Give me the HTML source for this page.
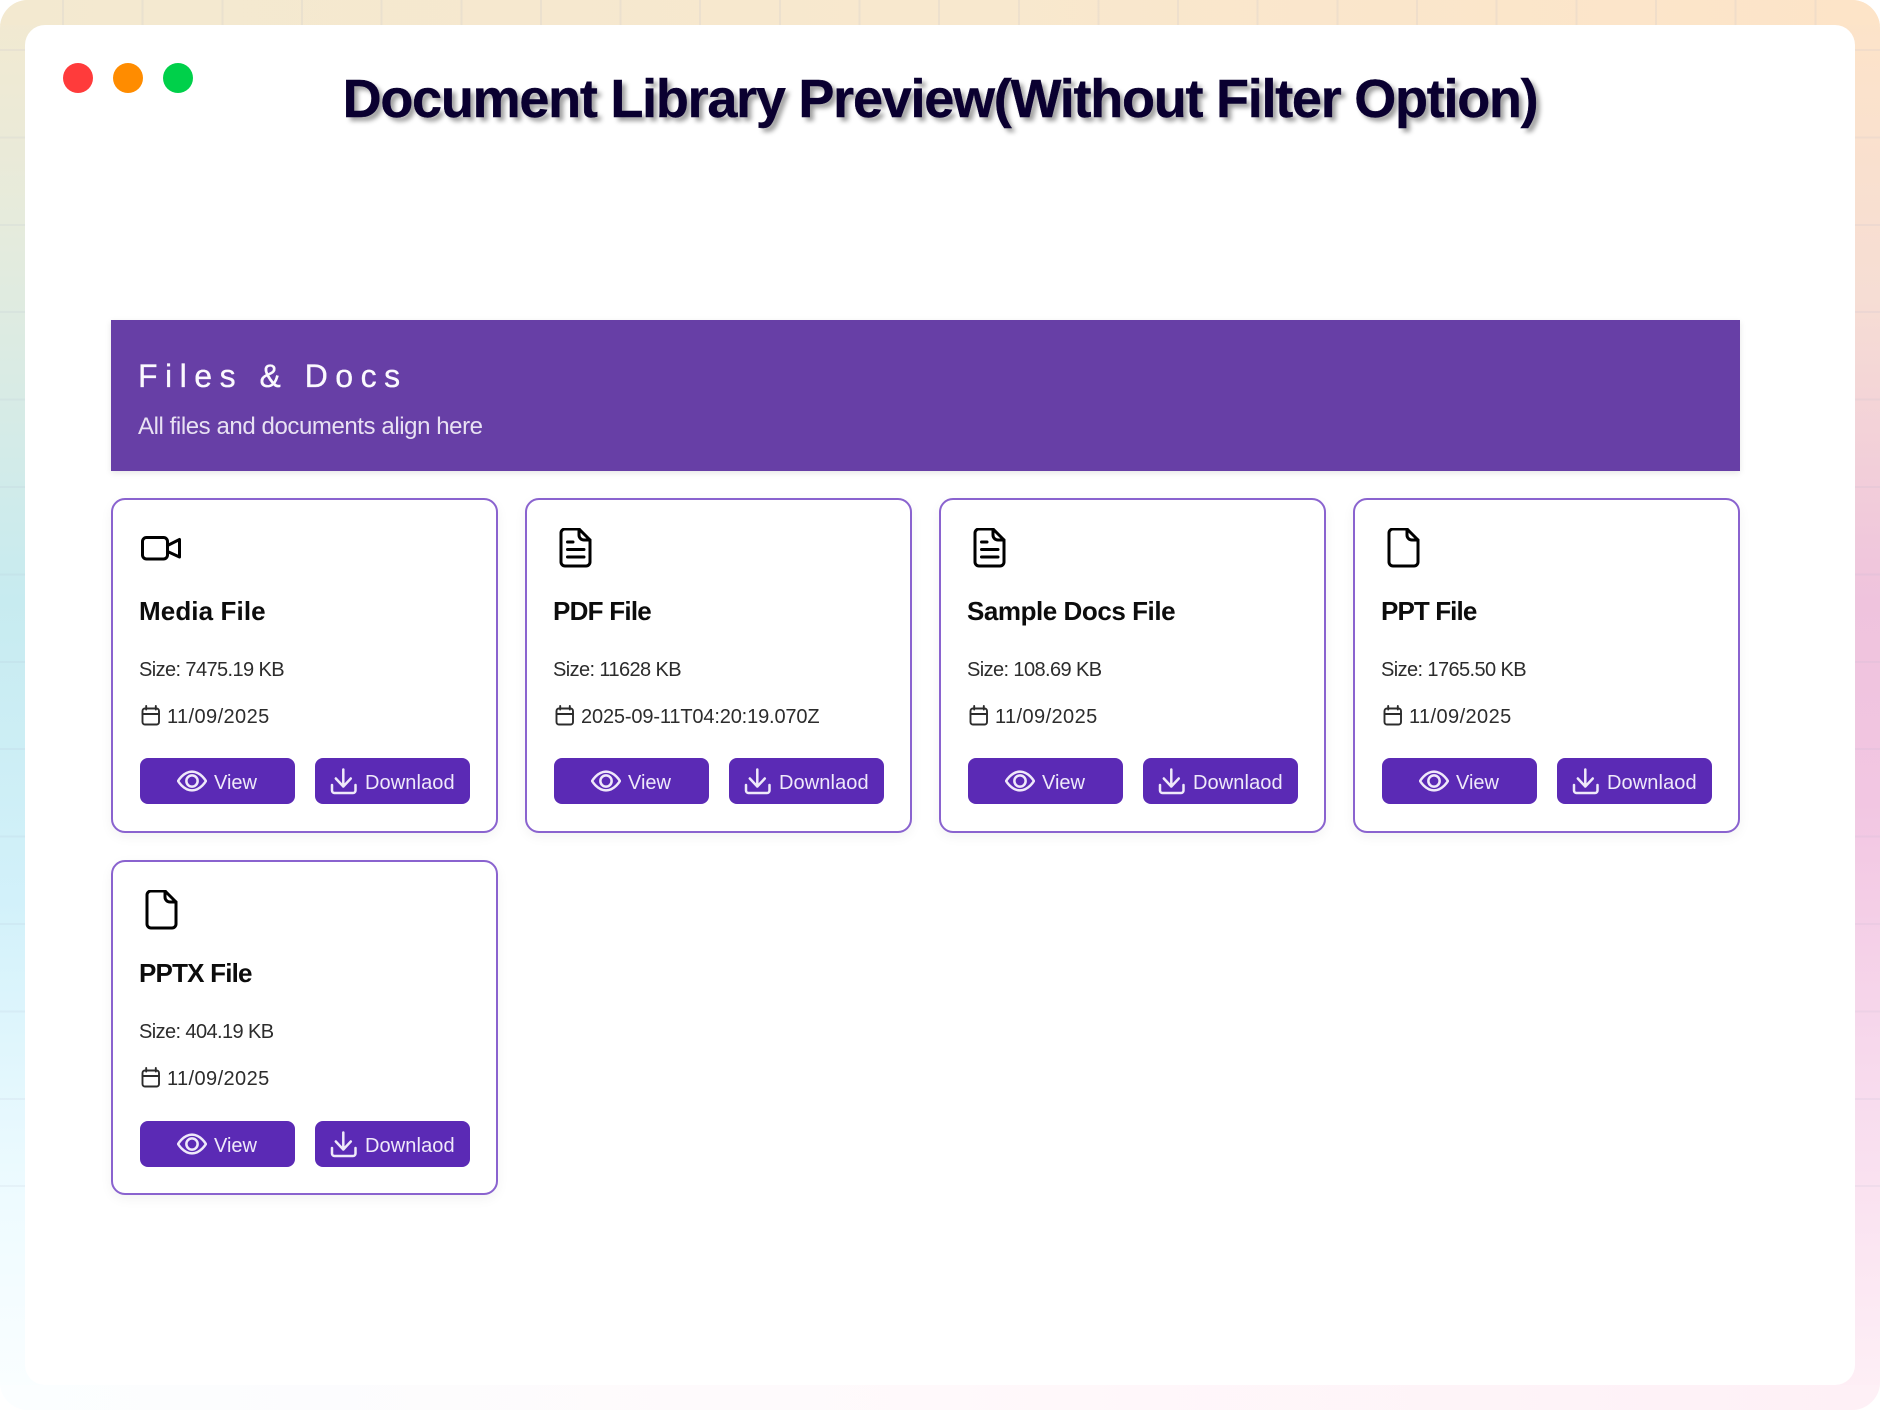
<!DOCTYPE html>
<html lang="en">
<head>
<meta charset="utf-8">
<title>Document Library Preview</title>
<style>
*{box-sizing:border-box}
html,body{margin:0;padding:0;background:#fff}
body{width:1880px;height:1410px;position:relative;overflow:hidden;font-family:"Liberation Sans",sans-serif}
.bg{position:absolute;left:0;top:0;width:1880px;height:1410px;border-radius:28px;overflow:hidden}
.bg div{position:absolute}
.l{left:0;top:0;width:940px;height:1410px;background:linear-gradient(180deg,#f3e9d0 0,#e6ebdc 220px,#c7ebf0 600px,#d2f1fa 900px,#eefbff 1200px,#fbfeff 1410px)}
.r{left:940px;top:0;width:940px;height:1410px;background:linear-gradient(180deg,#fde4c8 0,#f6ddd4 300px,#efc3dd 600px,#f2c6e2 800px,#f8dcee 1100px,#fef0f6 1410px)}
.t{left:0;top:0;width:1880px;height:25px;background:linear-gradient(90deg,#f3e9d0,#f8e8ce 50%,#fde4c8)}
.b{left:0;top:1385px;width:1880px;height:25px;background:linear-gradient(90deg,#fbfeff,#fff9fb 50%,#fef0f6)}
.gy{left:0;top:0;width:1880px;height:1200px;background:repeating-linear-gradient(180deg,transparent 0,transparent 49px,rgba(170,175,200,.12) 49px,rgba(170,175,200,.12) 51px,transparent 51px,transparent 87.4px)}
.gx{left:0;top:0;width:1880px;height:25px;background:repeating-linear-gradient(90deg,transparent 0,transparent 62px,rgba(170,175,200,.14) 62px,rgba(170,175,200,.14) 64px,transparent 64px,transparent 79.65px)}
.panel{position:absolute;left:25px;top:25px;width:1830px;height:1360px;background:#fff;border-radius:20px}
.dot{position:absolute;top:63px;width:30px;height:30px;border-radius:50%}
h1{position:absolute;left:0;top:66px;width:1880px;margin:0;text-align:center;font-size:54px;line-height:66px;font-weight:700;color:#0a0030;white-space:nowrap;letter-spacing:-1.25px;-webkit-text-stroke:.4px #0a0030;text-shadow:4px 4px 5px rgba(0,0,0,.38)}
.banner{position:absolute;left:111px;top:320px;width:1629px;height:151px;background:#673fa6;box-shadow:0 2px 6px rgba(0,0,0,.1)}
.banner h2{position:absolute;left:27px;top:36.5px;margin:0;font-size:32px;line-height:38px;font-weight:400;color:#fbf9fe;letter-spacing:7.5px;white-space:nowrap;-webkit-text-stroke:.3px #fbf9fe}
.banner p{position:absolute;left:27px;top:92px;margin:0;font-size:24px;line-height:30px;color:#e8e1f3;letter-spacing:-.42px;white-space:nowrap}
.card{position:absolute;width:387px;height:335px;background:#fff;border:2px solid #8a63cf;border-radius:14px;box-shadow:0 4px 12px rgba(0,0,0,.05)}
.ic{position:absolute;left:27px;top:28px;width:40px;height:40px;color:#000}
.ttl{position:absolute;left:26px;top:95.5px;font-size:26px;line-height:30px;font-weight:700;color:#0c0c0c;white-space:nowrap;margin:0}
.sz{position:absolute;left:26px;top:158.3px;font-size:20px;line-height:24px;color:#2c2c2c;white-space:nowrap;margin:0;letter-spacing:-.6px}
.dt{position:absolute;left:54px;top:205px;font-size:20px;line-height:24px;color:#2c2c2c;white-space:nowrap;letter-spacing:.4px}
.cal{position:absolute;left:27.5px;top:205px;width:20px;height:22px;color:#2c2c2c}
.btn{position:absolute;top:258px;width:155px;height:46px;background:#5b2ab5;border-radius:8px;color:#efe9fa;font-size:20px}
.btn svg{position:absolute;top:8px;width:30px;height:30px;color:#efe9fa}
.btn span{position:absolute;top:12.500px;line-height:24px;white-space:nowrap}
.v{left:26.5px}.d{left:202px}
.v svg{left:37px}.v span{left:74.500px}
.d svg{left:12px}.d span{left:50px;letter-spacing:.1px}
</style>
</head>
<body>
<div class="bg">
<div class="l"></div><div class="r"></div><div class="gy"></div><div class="t"></div><div class="b"></div><div class="gx"></div>
</div>
<div class="panel"></div>
<div class="dot" style="left:63px;background:#ff3b3b"></div>
<div class="dot" style="left:113px;background:#ff8c00"></div>
<div class="dot" style="left:163px;background:#00d04a"></div>
<h1>Document Library Preview(Without Filter Option)</h1>
<div class="banner"><h2>Files &amp; Docs</h2><p>All files and documents align here</p></div>

<svg width="0" height="0" style="position:absolute">
<symbol id="video" viewBox="0 0 40 40"><g fill="none" stroke="currentColor" stroke-width="3" stroke-linejoin="round" stroke-linecap="round"><rect x="1.500" y="9.500" width="25" height="21.500" rx="4"/><path d="M26.500 17.500 38.500 11.500V29L26.500 23.500"/></g></symbol>
<symbol id="doc" viewBox="0 0 40 40"><g fill="none" stroke="currentColor" stroke-width="3" stroke-linejoin="round" stroke-linecap="round"><path d="M11 1H25L36 12V34a4 4 0 0 1-4 4H11a4 4 0 0 1-4-4V5a4 4 0 0 1 4-4z"/><path d="M25 1V7a5 5 0 0 0 5 5h6"/><path d="M13.500 14H19M13.500 21.500H30M13.500 29H30"/></g></symbol>
<symbol id="file" viewBox="0 0 40 40"><g fill="none" stroke="currentColor" stroke-width="3" stroke-linejoin="round" stroke-linecap="round"><path d="M11 1H25L36 12V34a4 4 0 0 1-4 4H11a4 4 0 0 1-4-4V5a4 4 0 0 1 4-4z"/><path d="M25 1V7a5 5 0 0 0 5 5h6"/></g></symbol>
<symbol id="cal" viewBox="0 0 20 22"><g fill="none" stroke="currentColor" stroke-width="1.900" stroke-linecap="round"><rect x="1.500" y="3.500" width="16.500" height="16" rx="2.500"/><path d="M1.500 9H18M5.200 1V4.500M14.800 1V4.500"/></g></symbol>
<symbol id="eye" viewBox="0 0 16 16"><g fill="currentColor" stroke="currentColor" stroke-width=".35"><path d="M16 8s-3-5.500-8-5.500S0 8 0 8s3 5.500 8 5.500S16 8 16 8zM1.173 8a13.133 13.133 0 0 1 1.660-2.043C4.120 4.668 5.880 3.500 8 3.500c2.120 0 3.879 1.168 5.168 2.457A13.133 13.133 0 0 1 14.828 8c-.058.087-.122.183-.195.288-.335.48-.83 1.120-1.465 1.755C11.879 11.332 10.119 12.500 8 12.500c-2.120 0-3.879-1.168-5.168-2.457A13.134 13.134 0 0 1 1.172 8z"/><path d="M8 5.500a2.500 2.500 0 1 0 0 5 2.500 2.500 0 0 0 0-5zM4.500 8a3.500 3.500 0 1 1 7 0 3.500 3.500 0 0 1-7 0z"/></g></symbol>
<symbol id="dl" viewBox="0 0 30 30"><g fill="none" stroke="currentColor" stroke-width="2.500" stroke-linecap="round" stroke-linejoin="round"><path d="M16.300 3.500V20.500M8.800 12.500 16.300 20.500 23.800 12.500"/><path d="M5 19V24.500A2.500 2.500 0 0 0 7.500 27H26A2.500 2.500 0 0 0 28.500 24.500V19"/></g></symbol>
</svg>

<div class="card" style="left:111px;top:498px">
<svg class="ic" style="left:28px"><use href="#video"/></svg>
<h3 class="ttl" style="letter-spacing:.1px">Media File</h3><p class="sz">Size: 7475.19 KB</p>
<svg class="cal"><use href="#cal"/></svg><span class="dt">11/09/2025</span>
<div class="btn v"><svg><use href="#eye"/></svg><span>View</span></div>
<div class="btn d"><svg><use href="#dl"/></svg><span>Downlaod</span></div>
</div>

<div class="card" style="left:525px;top:498px">
<svg class="ic"><use href="#doc"/></svg>
<h3 class="ttl" style="letter-spacing:-.75px">PDF File</h3><p class="sz">Size: 11628 KB</p>
<svg class="cal"><use href="#cal"/></svg><span class="dt" style="letter-spacing:-.15px">2025-09-11T04:20:19.070Z</span>
<div class="btn v"><svg><use href="#eye"/></svg><span>View</span></div>
<div class="btn d"><svg><use href="#dl"/></svg><span>Downlaod</span></div>
</div>

<div class="card" style="left:939px;top:498px">
<svg class="ic"><use href="#doc"/></svg>
<h3 class="ttl" style="letter-spacing:-.45px">Sample Docs File</h3><p class="sz">Size: 108.69 KB</p>
<svg class="cal"><use href="#cal"/></svg><span class="dt">11/09/2025</span>
<div class="btn v"><svg><use href="#eye"/></svg><span>View</span></div>
<div class="btn d"><svg><use href="#dl"/></svg><span>Downlaod</span></div>
</div>

<div class="card" style="left:1353px;top:498px">
<svg class="ic"><use href="#file"/></svg>
<h3 class="ttl" style="letter-spacing:-.9px">PPT File</h3><p class="sz">Size: 1765.50 KB</p>
<svg class="cal"><use href="#cal"/></svg><span class="dt">11/09/2025</span>
<div class="btn v"><svg><use href="#eye"/></svg><span>View</span></div>
<div class="btn d"><svg><use href="#dl"/></svg><span>Downlaod</span></div>
</div>

<div class="card" style="left:111px;top:860px">
<svg class="ic"><use href="#file"/></svg>
<h3 class="ttl" style="letter-spacing:-.8px">PPTX File</h3><p class="sz">Size: 404.19 KB</p>
<svg class="cal"><use href="#cal"/></svg><span class="dt">11/09/2025</span>
<div class="btn v" style="top:259px"><svg><use href="#eye"/></svg><span>View</span></div>
<div class="btn d" style="top:259px"><svg><use href="#dl"/></svg><span>Downlaod</span></div>
</div>
</body>
</html>
